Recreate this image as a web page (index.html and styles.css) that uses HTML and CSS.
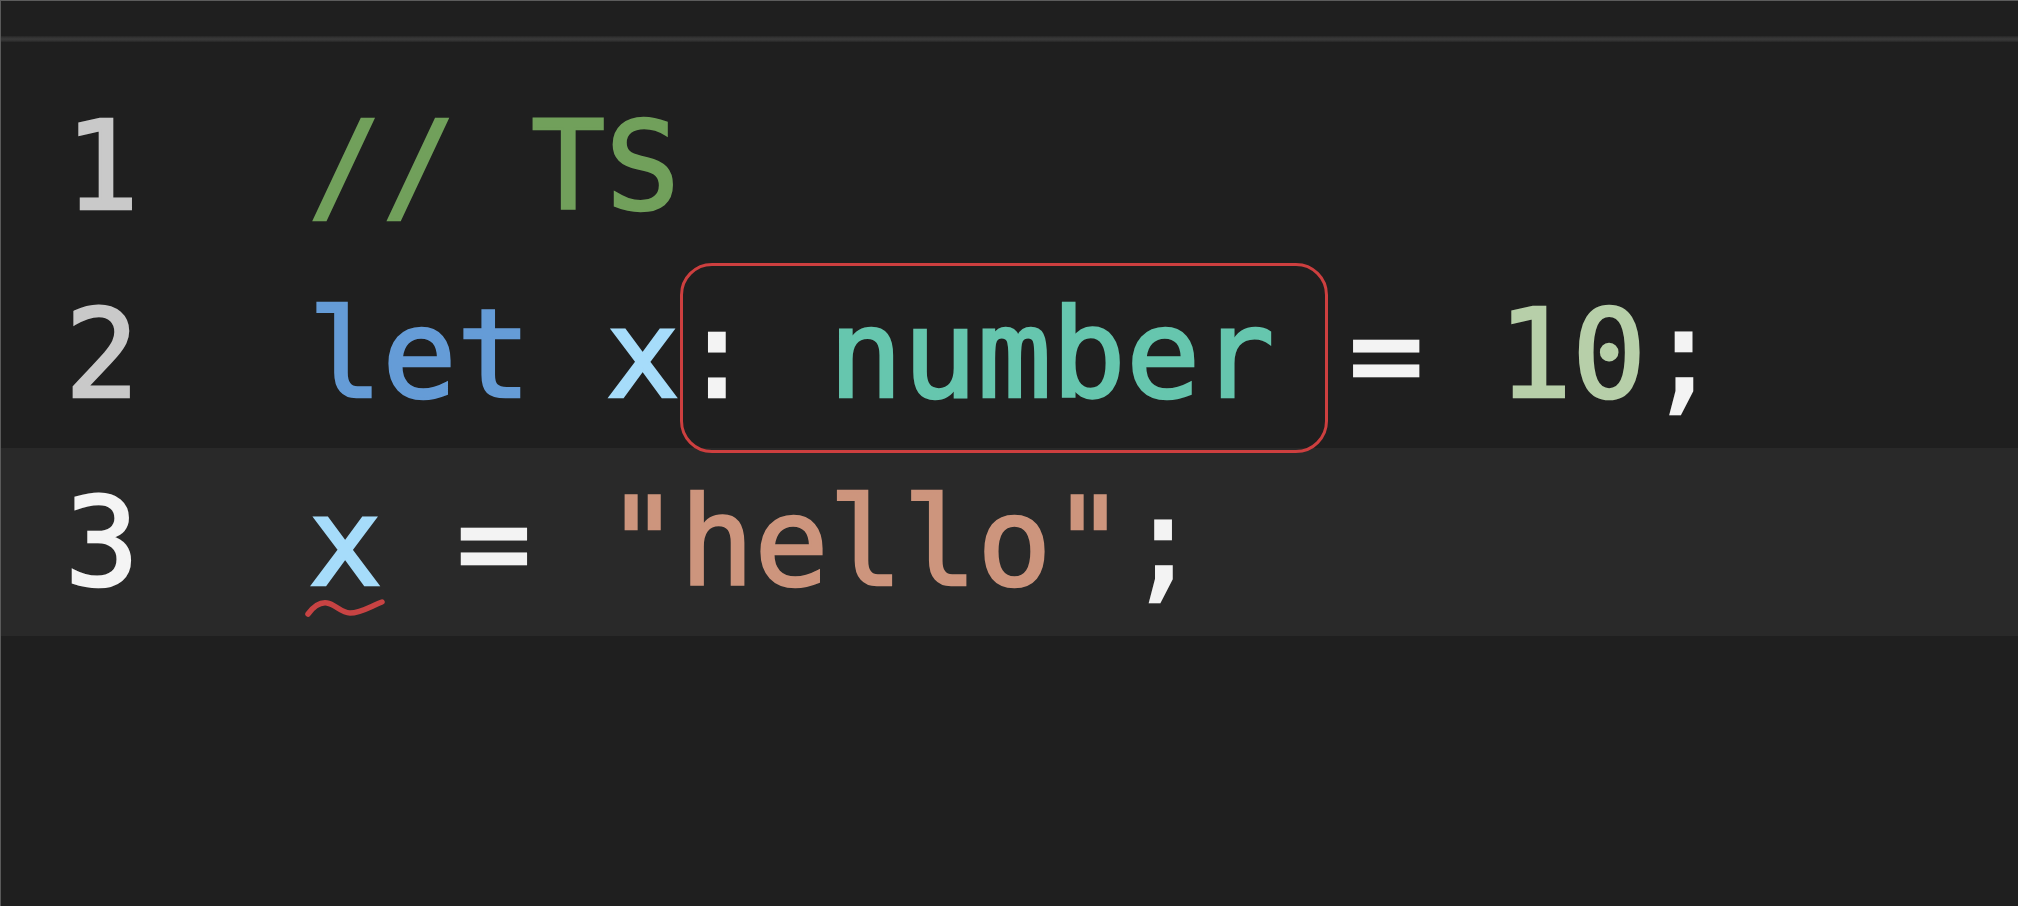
FILE: index.html
```html
<!DOCTYPE html>
<html lang="en">
<head>
<meta charset="utf-8">
<title>TS editor</title>
<link rel="stylesheet" href="styles.css">
</head>
<body>
<div class="editor">
  <div class="tabbar"></div>
  <div class="rule"></div>
  <div class="lines">
    <div class="line">
      <span class="ln">1</span>
      <span class="code"><span class="tok-comment">// TS</span></span>
    </div>
    <div class="line">
      <span class="ln">2</span>
      <span class="code"><span class="tok-kw">let</span> <span class="tok-var">x</span><span class="tok-punc">:</span> <span class="tok-type">number</span> <span class="tok-punc">=</span> <span class="tok-num">10</span><span class="tok-punc">;</span><span class="mark-box"></span></span>
    </div>
    <div class="line line-active">
      <span class="ln">3</span>
      <span class="code"><span class="tok-var tok-err">x<svg class="squiggle" width="82" height="26" viewBox="0 0 82 26"><path d="M3 19 C 9 11, 15 7, 22 8 C 30 9, 36 18, 45 18 C 56 18, 66 11, 77 7" fill="none" stroke="#c84343" stroke-width="5.5" stroke-linecap="round"/></svg></span> <span class="tok-punc">=</span> <span class="tok-str">"hello"</span><span class="tok-punc">;</span></span>
    </div>
  </div>
</div>
</body>
</html>
```

FILE: styles.css
```css
html, body {
  margin: 0;
  padding: 0;
  background: #1f1f1f;
}

.editor {
  box-sizing: border-box;
  width: 2018px;
  height: 906px;
  background: #1f1f1f;
  border-top: 1px solid #5c5c5c;
  border-left: 1px solid #5a5a5a;
  overflow: hidden;
  display: flex;
  flex-direction: column;
}

.tabbar {
  height: 35px;
  flex: none;
}

.rule {
  height: 6px;
  flex: none;
  background: linear-gradient(#262626, #363636 35%, #383838 65%, #262626);
}

.lines {
  padding-top: 30px;
  display: flex;
  flex-direction: column;
}

.line {
  display: flex;
  height: 188px;
  line-height: 188px;
  font-family: "DejaVu Sans Mono", "Liberation Mono", monospace;
  font-size: 123.5px;
  white-space: pre;
  -webkit-text-stroke: 2.5px currentColor;
}

.line-active {
  background: #292929;
}

.ln {
  width: 138px;
  text-align: right;
  color: #c9c9c9;
  flex: none;
}

.line-active .ln {
  color: #f4f4f4;
}

.code {
  position: relative;
  margin-left: 169px;
  color: #f2f2f2;
}

.tok-comment { color: #71a05b; }
.tok-kw { color: #659cd7; }
.tok-var { color: #a6dcfa; }
.tok-punc { color: #f3f3f3; }
.tok-type { color: #66c6ae; }
.tok-num { color: #b7cfa9; }
.tok-str { color: #cd957d; }

.tok-err {
  position: relative;
}

.squiggle {
  position: absolute;
  left: -3px;
  top: 125px;
}

.mark-box {
  position: absolute;
  left: 5ch;
  top: 3px;
  width: 8.72ch;
  height: 190px;
  box-sizing: border-box;
  border: 3px solid #cd3f3f;
  border-radius: 32px;
  -webkit-text-stroke: 0;
}
```
